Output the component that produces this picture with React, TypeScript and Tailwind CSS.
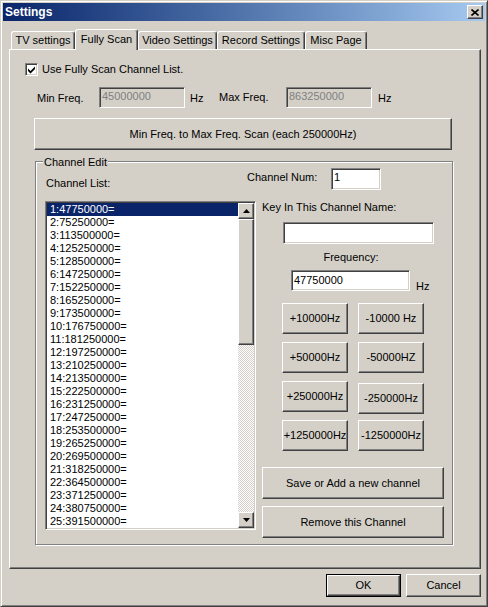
import React from 'react';

const raised =
  'border border-t-white border-l-white border-r-[#404040] border-b-[#404040] shadow-[inset_-1px_-1px_0_#808080] bg-[#d4d0c8]';
const sunken =
  'border border-t-[#808080] border-l-[#808080] border-r-white border-b-white shadow-[inset_1px_1px_0_#404040,inset_-1px_-1px_0_#d4d0c8]';

const channels = [
  '1:47750000=',
  '2:75250000=',
  '3:113500000=',
  '4:125250000=',
  '5:128500000=',
  '6:147250000=',
  '7:152250000=',
  '8:165250000=',
  '9:173500000=',
  '10:176750000=',
  '11:181250000=',
  '12:197250000=',
  '13:210250000=',
  '14:213500000=',
  '15:222500000=',
  '16:231250000=',
  '17:247250000=',
  '18:253500000=',
  '19:265250000=',
  '20:269500000=',
  '21:318250000=',
  '22:364500000=',
  '23:371250000=',
  '24:380750000=',
  '25:391500000=',
];

const tabs = [
  { label: 'TV settings', w: 'w-[64px]', active: false },
  { label: 'Fully Scan', w: 'w-[63px]', active: true },
  { label: 'Video Settings', w: 'w-[79px]', active: false },
  { label: 'Record Settings', w: 'w-[88px]', active: false },
  { label: 'Misc Page', w: 'w-[62px]', active: false },
];

function Button({ className = '', children }: { className?: string; children: React.ReactNode }) {
  return (
    <div className={`${raised} flex items-center justify-center leading-[13px] whitespace-nowrap ${className}`}>
      {children}
    </div>
  );
}

function Arrow({ down }: { down?: boolean }) {
  return (
    <svg width="7" height="4" viewBox="0 0 7 4">
      {down ? <polygon points="0,0 7,0 3.5,4" fill="#000" /> : <polygon points="0,4 7,4 3.5,0" fill="#000" />}
    </svg>
  );
}

function ChannelList() {
  return (
    <div className={`${sunken} ml-[9px] w-[211px] h-[329px] bg-white p-[1px] flex`}>
      <div className="w-[191px] h-full overflow-hidden">
        {channels.map((c, i) => (
          <div
            key={c}
            className={`h-[13px] leading-[13px] pl-[3px] ${i === 0 ? 'bg-[#0a246a] text-white' : ''}`}
          >
            {c}
          </div>
        ))}
      </div>
      <div className="w-[16px] h-full flex flex-col">
        <div className={`${raised} h-[16px] flex items-center justify-center`}>
          <Arrow />
        </div>
        <div className={`${raised} h-[126px]`} />
        <div className="flex-1 bg-[image:repeating-conic-gradient(#d4d0c8_0_25%,#ffffff_0_50%)] bg-[length:2px_2px]" />
        <div className={`${raised} h-[16px] flex items-center justify-center`}>
          <Arrow down />
        </div>
      </div>
    </div>
  );
}

export default function App() {
  return (
    <div className="w-[488px] h-[607px] overflow-hidden bg-[#d4d0c8] border border-t-[#d4d0c8] border-l-[#d4d0c8] border-r-[#404040] border-b-[#404040] shadow-[inset_1px_1px_0_#ffffff,inset_-1px_-1px_0_#808080] flex flex-col text-[11px] text-black font-['Liberation_Sans',Arial,sans-serif] select-none">
      {/* title bar */}
      <div className="mx-[2px] mt-[2px] h-[18px] shrink-0 flex items-center bg-linear-to-r from-[#0a246a] to-[#a6caf0]">
        <span className="ml-[2px] text-[12px] font-bold text-white leading-[18px]">Settings</span>
        <div className={`${raised} ml-auto mr-[2px] w-[16px] h-[14px] flex items-center justify-center`}>
          <svg width="8" height="7" viewBox="0 0 8 7">
            <path d="M0.5 0.5L7.5 6.5M7.5 0.5L0.5 6.5" stroke="#000" strokeWidth="1.6" />
          </svg>
        </div>
      </div>

      {/* tabs */}
      <div className="mt-[8px] ml-[10px] flex items-end shrink-0">
        {tabs.map((t) =>
          t.active ? (
            <div
              key={t.label}
              className={`relative z-10 -mb-px h-[21px] ${t.w} bg-[#d4d0c8] border-t border-l border-r border-t-white border-l-white border-r-[#404040] shadow-[inset_-1px_0_0_#808080] rounded-t-[3px] flex items-center justify-center pb-[2px] leading-[13px]`}
            >
              {t.label}
            </div>
          ) : (
            <div
              key={t.label}
              className={`h-[18px] ${t.w} border-t border-l border-r border-t-white border-l-white border-r-[#404040] shadow-[inset_-1px_0_0_#808080] rounded-t-[3px] flex items-center justify-center leading-[13px]`}
            >
              {t.label}
            </div>
          )
        )}
      </div>

      {/* tab panel */}
      <div className="ml-[8px] w-[472px] h-[520px] shrink-0 border border-t-white border-l-white border-r-[#404040] border-b-[#404040] shadow-[inset_-1px_-1px_0_#808080] flex flex-col">
        <div className="mt-[13px] ml-[15px] flex items-center h-[13px]">
          <div className={`${sunken} bg-white w-[13px] h-[13px] flex items-center justify-center`}>
            <svg width="7" height="8" viewBox="0 0 7 8">
              <polygon points="0,2.5 2.5,5 7,0.5 7,3 2.5,7.5 0,5" fill="#000" />
            </svg>
          </div>
          <span className="ml-[4px] leading-[13px]">Use Fully Scan Channel List.</span>
        </div>

        <div className="mt-[11px] ml-[27px] flex items-center h-[21px]">
          <span className="w-[62px] leading-[13px] pt-[1px]">Min Freq.</span>
          <div className={`${sunken} w-[86px] h-[21px] pl-[2px] pt-[2px] leading-[13px] text-[#808080]`}>45000000</div>
          <span className="ml-[5px] w-[29px] leading-[13px] pt-[1px]">Hz</span>
          <span className="w-[67px] leading-[13px]">Max Freq.</span>
          <div className={`${sunken} w-[86px] h-[21px] pl-[2px] pt-[2px] leading-[13px] text-[#808080]`}>863250000</div>
          <span className="ml-[6px] leading-[13px] pt-[1px]">Hz</span>
        </div>

        <Button className="mt-[10px] ml-[24px] w-[418px] h-[32px]">Min Freq. to Max Freq. Scan (each 250000Hz)</Button>

        {/* channel edit group */}
        <div className="relative mt-[11px] ml-[25px] w-[418px] h-[384px] border border-[#808080] shadow-[inset_1px_1px_0_#ffffff,1px_1px_0_#ffffff] flex flex-col">
          <span className="absolute -top-[6px] left-[7px] px-[1px] bg-[#d4d0c8] leading-[13px]">Channel Edit</span>

          <div className="mt-[6px] flex items-center h-[22px]">
            <span className="ml-[10px] w-[201px] self-end leading-[13px]">Channel List:</span>
            <span className="w-[84px] self-start mt-[3px] leading-[13px]">Channel Num:</span>
            <div className={`${sunken} w-[50px] h-[22px] bg-white pl-[2px] pt-[2px] leading-[13px]`}>1</div>
          </div>

          <div className="mt-[11px] flex">
            <ChannelList />

            <div className="ml-[6px] flex flex-col">
              <span className="leading-[13px]">Key In This Channel Name:</span>
              <div className={`${sunken} mt-[8px] ml-[21px] w-[151px] h-[22px] bg-white`} />
              <span className="mt-[7px] w-[178px] text-center leading-[13px]">Frequency:</span>
              <div className="mt-[6px] ml-[29px] flex items-start">
                <div className={`${sunken} w-[119px] h-[21px] bg-white pl-[2px] pt-[3px] leading-[13px]`}>47750000</div>
                <span className="ml-[6px] mt-[10px] leading-[13px]">Hz</span>
              </div>

              <div className="mt-[10px] ml-[20px] flex gap-[10px]">
                <Button className="w-[66px] h-[31px]">+10000Hz</Button>
                <Button className="w-[66px] h-[31px]">-10000 Hz</Button>
              </div>
              <div className="mt-[8px] ml-[20px] flex gap-[10px]">
                <Button className="w-[66px] h-[31px]">+50000Hz</Button>
                <Button className="w-[66px] h-[31px]">-50000HZ</Button>
              </div>
              <div className="mt-[8px] ml-[20px] flex items-start gap-[10px]">
                <Button className="w-[66px] h-[31px]">+250000Hz</Button>
                <Button className="mt-[2px] w-[66px] h-[31px]">-250000Hz</Button>
              </div>
              <div className="mt-[6px] ml-[20px] flex gap-[10px]">
                <Button className="w-[66px] h-[31px]">+1250000Hz</Button>
                <Button className="w-[66px] h-[31px]">-1250000Hz</Button>
              </div>

              <Button className="mt-[16px] w-[182px] h-[32px]">Save or Add a new channel</Button>
              <Button className="mt-[7px] w-[182px] h-[32px]">Remove this Channel</Button>
            </div>
          </div>
        </div>
      </div>

      {/* dialog buttons */}
      <div className="mt-[5px] mr-[6px] flex justify-end gap-[5px] shrink-0">
        <div className="w-[75px] h-[23px] border border-black flex">
          <Button className="flex-1">OK</Button>
        </div>
        <Button className="w-[75px] h-[23px]">Cancel</Button>
      </div>
    </div>
  );
}
